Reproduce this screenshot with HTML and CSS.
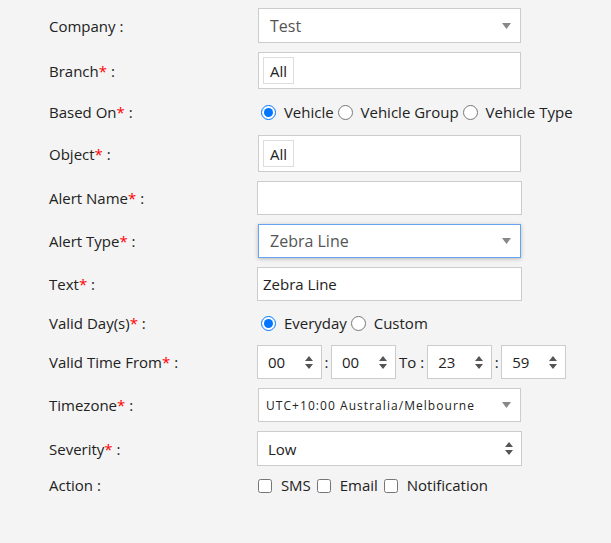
FILE: index.html
```
<!DOCTYPE html>
<html lang="en">
<head>
  <meta charset="UTF-8">
  <title>Alert Setting</title>
  <link rel="stylesheet" href="styles.css">
</head>
<body>
  <div class="form">
    <div class="row r35">
      <div class="lbl">Company :</div>
      <div class="sel">Test<svg class="caret" width="9" height="6" viewBox="0 0 9 6"><path d="M0 0H9L4.5 6Z"/></svg></div>
    </div>
    <div class="row r37">
      <div class="lbl">Branch<span class="req">*</span> :</div>
      <div class="tags"><span class="tag">All</span></div>
    </div>
    <div class="row r28">
      <div class="lbl">Based On<span class="req">*</span> :</div>
      <div class="opts">
        <label><input type="radio" name="based" checked> Vehicle</label><label><input type="radio" name="based"> Vehicle Group</label><label><input type="radio" name="based"> Vehicle Type</label>
      </div>
    </div>
    <div class="row r37">
      <div class="lbl">Object<span class="req">*</span> :</div>
      <div class="tags"><span class="tag">All</span></div>
    </div>
    <div class="row r34">
      <div class="lbl">Alert Name<span class="req">*</span> :</div>
      <div class="inp"></div>
    </div>
    <div class="row r34">
      <div class="lbl">Alert Type<span class="req">*</span> :</div>
      <div class="sel focus">Zebra Line<svg class="caret" width="9" height="6" viewBox="0 0 9 6"><path d="M0 0H9L4.5 6Z"/></svg></div>
    </div>
    <div class="row r34">
      <div class="lbl">Text<span class="req">*</span> :</div>
      <div class="inp">Zebra Line</div>
    </div>
    <div class="row r26">
      <div class="lbl">Valid Day(s)<span class="req">*</span> :</div>
      <div class="opts">
        <label><input type="radio" name="day" checked> Everyday</label><label><input type="radio" name="day"> Custom</label>
      </div>
    </div>
    <div class="row r34">
      <div class="lbl">Valid Time From<span class="req">*</span> :</div>
      <div class="times">
        <div class="spin">00<svg width="8" height="13" viewBox="0 0 8 13"><path d="M0 5H8L4 0Z M0 8H8L4 13Z"/></svg></div>
        <span class="sep">:</span>
        <div class="spin">00<svg width="8" height="13" viewBox="0 0 8 13"><path d="M0 5H8L4 0Z M0 8H8L4 13Z"/></svg></div>
        <span class="to">To :</span>
        <div class="spin">23<svg width="8" height="13" viewBox="0 0 8 13"><path d="M0 5H8L4 0Z M0 8H8L4 13Z"/></svg></div>
        <span class="sep">:</span>
        <div class="spin">59<svg width="8" height="13" viewBox="0 0 8 13"><path d="M0 5H8L4 0Z M0 8H8L4 13Z"/></svg></div>
      </div>
    </div>
    <div class="row r34">
      <div class="lbl">Timezone<span class="req">*</span> :</div>
      <div class="sel tz">UTC+10:00 Australia/Melbourne<svg class="caret" width="9" height="6" viewBox="0 0 9 6"><path d="M0 0H9L4.5 6Z"/></svg></div>
    </div>
    <div class="row r35">
      <div class="lbl">Severity<span class="req">*</span> :</div>
      <div class="inp sev">Low<svg width="8" height="13" viewBox="0 0 8 13"><path d="M0 5H8L4 0Z M0 8H8L4 13Z"/></svg></div>
    </div>
    <div class="row r20">
      <div class="lbl">Action :</div>
      <div class="opts checks">
        <label><input type="checkbox"> SMS</label><label><input type="checkbox"> Email</label><label><input type="checkbox"> Notification</label>
      </div>
    </div>
  </div>
</body>
</html>
```

FILE: styles.css
```
body {
  margin: 0;
  background: #f4f4f4;
  font-family: "Open Sans", sans-serif;
  font-size: 15px;
  color: #222;
}
.form {
  display: flex;
  flex-direction: column;
  gap: 9px;
  padding: 8px 0 40px 49px;
}
.row {
  display: flex;
  align-items: center;
}
.r35 { height: 35px; }
.r37 { height: 37px; }
.r34 { height: 34px; }
.r28 { height: 28px; }
.r26 { height: 26px; }
.r20 { height: 20px; }

.lbl {
  width: 208px;
}
.req {
  color: #ff0000;
}

.sel, .inp, .tags {
  box-sizing: border-box;
  height: 100%;
  background: #fff;
  border: 1px solid #ccc;
  display: flex;
  align-items: center;
}
.sel {
  width: 263px;
  margin-left: 1px;
  padding: 0 9px 0 11px;
  justify-content: space-between;
  font-size: 16px;
  color: #555;
}
.caret {
  fill: #888;
}
.sel.focus {
  border-color: #66a3f0;
  box-shadow: 0 1px 4px rgba(0, 0, 0, 0.25);
}
.sel.tz {
  font-size: 12px;
  color: #222;
  padding-left: 7px;
  letter-spacing: 1.05px;
}
.inp {
  width: 265px;
  padding: 0 5px;
}
.inp.sev {
  padding: 0 8px 0 10px;
  justify-content: space-between;
}
.inp.sev svg, .spin svg {
  fill: #555;
}
.tags {
  width: 263px;
  margin-left: 1px;
  padding: 0 4px;
}
.tag {
  border: 1px solid #ddd;
  height: 27px;
  box-sizing: border-box;
  padding: 0 6px;
  display: flex;
  align-items: center;
}

.opts {
  display: flex;
  align-items: center;
}
.opts input[type="radio"] {
  accent-color: #0075ff;
  width: 15px;
  height: 15px;
  margin: 0 4px 0 4px;
  vertical-align: -2px;
}
.checks input {
  margin: 0 5px 0 1px;
  width: 14px;
  height: 14px;
  vertical-align: -2px;
}
.checks label + label input {
  margin-left: 6px;
}

.times {
  display: flex;
  align-items: center;
  height: 100%;
}
.spin {
  box-sizing: border-box;
  width: 65px;
  height: 100%;
  background: #fff;
  border: 1px solid #ccc;
  display: flex;
  align-items: center;
  justify-content: space-between;
  padding: 0 8px 0 10px;
}
.sep {
  width: 9px;
  text-align: center;
}
.to {
  padding: 0 3px 0 3px;
}
```
